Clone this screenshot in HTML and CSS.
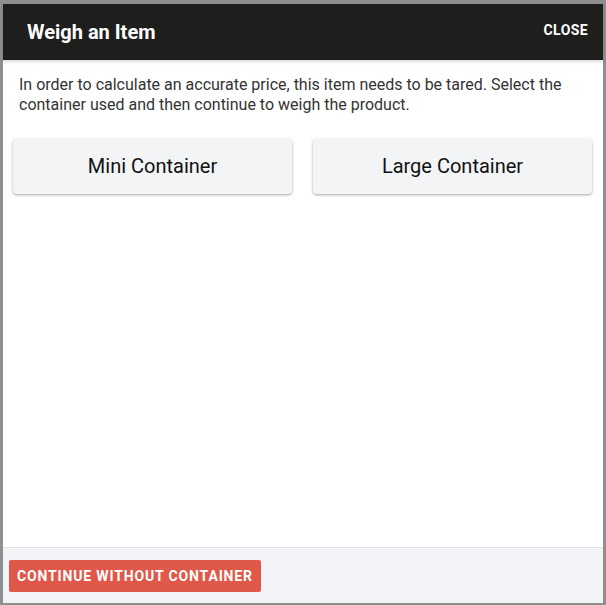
FILE: index.html
```html
<!DOCTYPE html>
<html lang="en">
<head>
    <meta charset="UTF-8">
    <meta name="viewport" content="width=device-width, initial-scale=1.0">
    <title>Weigh an Item</title>
    <link rel="stylesheet" href="styles.css">
</head>
<body>
    <div class="modal">
        <div class="modal-header">
            <h2>Weigh an Item</h2>
            <button class="close-button">Close</button>
        </div>

        <div class="modal-body">
            <p>In order to calculate an accurate price, this item needs to be tared. Select the container used and then continue to weigh the product.</p>
            <div class="container-options">
                <button class="container-button">Mini Container</button>
                <button class="container-button">Large Container</button>
            </div>
        </div>

        <div class="modal-footer">
            <button class="skip-button">Continue without container</button>
        </div>
    </div>
</body>
</html>
```

FILE: styles.css
```css
html, body {
    height: 100%;
}

body {
    font-family: Roboto, "Liberation Sans", Arial, sans-serif;
    background-color: #8f8f8f;
    margin: 0;
    padding: 4px 3px 2px 3px;
    box-sizing: border-box;
}

.modal {
    height: 100%;
    display: flex;
    flex-direction: column;
    background-color: #fff;
}

.modal-header {
    display: flex;
    justify-content: space-between;
    align-items: center;
    height: 56px;
    padding: 0 15px 0 24px;
    background-color: #1e1e1c;
    color: #fff;
    box-shadow: 0 2px 3px rgba(0, 0, 0, 0.15);
}

.modal-header h2 {
    margin: 0;
    font-size: 20px;
    font-weight: 700;
}

.close-button {
    background: none;
    border: none;
    color: #fff;
    font-family: inherit;
    font-size: 14px;
    font-weight: 700;
    text-transform: uppercase;
    letter-spacing: 0.4px;
    padding: 0;
    margin-bottom: 4px;
    cursor: pointer;
}

.modal-body {
    flex: 1;
    padding: 15px 10px 0 16px;
}

.modal-body p {
    margin: 0;
    font-size: 16px;
    line-height: 20px;
    color: #333;
}

.container-options {
    display: grid;
    grid-template-columns: 1fr 1fr;
    gap: 21px;
    margin: 24px 1px 0 -6px;
}

.container-button {
    height: 55px;
    padding-bottom: 2px;
    background-color: #f3f4f6;
    border: none;
    border-radius: 4px;
    box-shadow: 0 1px 3px rgba(0, 0, 0, 0.35);
    font-family: inherit;
    font-size: 20px;
    color: #111;
    cursor: pointer;
}

.modal-footer {
    height: 55px;
    display: flex;
    align-items: center;
    padding: 0 6px;
    background-color: #f3f4f7;
    border-top: 1px solid #e2e3e6;
}

.skip-button {
    height: 32px;
    padding: 0 8px;
    background-color: #e05849;
    border: none;
    border-radius: 2px;
    color: #fff;
    font-family: inherit;
    font-size: 14px;
    font-weight: 700;
    text-transform: uppercase;
    letter-spacing: 0.85px;
    cursor: pointer;
}
```
